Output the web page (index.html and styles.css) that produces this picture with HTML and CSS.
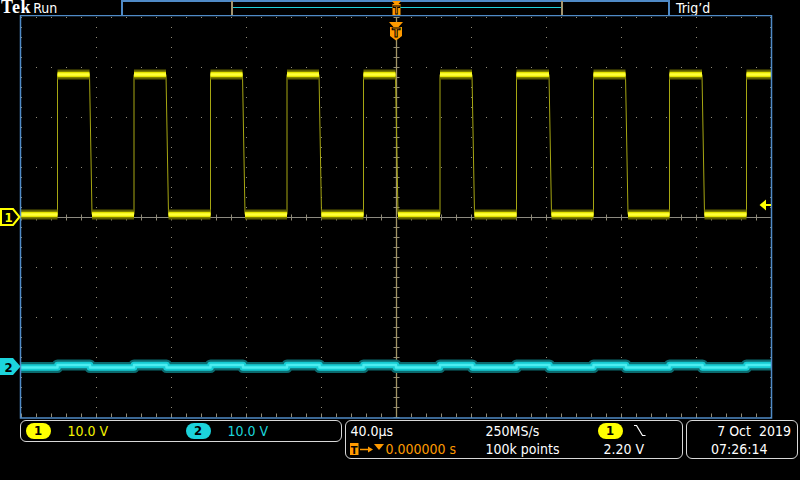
FILE: index.html
```html
<!DOCTYPE html>
<html>
<head>
<meta charset="utf-8">
<title>Tek scope</title>
<link rel="stylesheet" href="styles.css">
</head>
<body>
<div class="screen">
  <header class="topbar">
    <div class="brand"><span class="tek">Tek</span><span class="state">Run</span></div>
    <div class="record">
      <svg class="record-view" width="545" height="13" viewBox="123 2 545 13">
        <rect class="bracket" x="231" y="1" width="2" height="14"/>
        <rect class="bracket" x="561" y="1" width="2" height="14"/>
        <rect class="rec-line" x="233" y="7" width="328" height="1"/>
        <path class="trig-mark" d="M392 1H401L398.5 4H400.5V15H392.5V4H394.5Z"/>
        <text class="trig-t trig-t-small" x="396.5" y="14">T</text>
      </svg>
    </div>
    <div class="trig">Trig’d</div>
  </header>

  <svg class="scope" width="800" height="405" viewBox="0 15 800 405">
    <g class="grid">
      <path class="dots-h" d="M21 17.5H772M21 67.5H772M21 117.5H772M21 167.5H772M21 217.5H772M21 267.5H772M21 317.5H772M21 367.5H772M21 416.5H772"/>
      <path class="dots-v" d="M21.5 17V418M96.5 17V418M171.5 17V418M246.5 17V418M321.5 17V418M396.5 17V418M471.5 17V418M546.5 17V418M621.5 17V418M696.5 17V418M770.5 17V418"/>
      <path class="ticks-h" d="M21 217.5H772"/>
      <path class="ticks-v" d="M396.5 17V418"/>
      <path class="ticks-b" d="M21 415H772"/>
    </g>
    <path class="ref-line" d="M21 217.5H771"/>
    <path class="pos-line" d="M396.5 17V418"/>

    <g class="ch2">
      <path class="ch2-halo" d="M21 367.5H57.5V365H90V367.5H134V365H166.5V367.5H210.5V365H243V367.5H287V365H319.5V367.5H363.5V365H396V367.5H440V365H472.5V367.5H516.5V365H549.5V367.5H593.5V365H626V367.5H669.5V365H702.5V367.5H746.5V365H771"/>
      <path class="ch2-core" d="M21 367.5H57.5V365H90V367.5H134V365H166.5V367.5H210.5V365H243V367.5H287V365H319.5V367.5H363.5V365H396V367.5H440V365H472.5V367.5H516.5V365H549.5V367.5H593.5V365H626V367.5H669.5V365H702.5V367.5H746.5V365H771"/>
      <path class="ch2-hot" d="M21 367.5H57.5V365H90V367.5H134V365H166.5V367.5H210.5V365H243V367.5H287V365H319.5V367.5H363.5V365H396V367.5H440V365H472.5V367.5H516.5V365H549.5V367.5H593.5V365H626V367.5H669.5V365H702.5V367.5H746.5V365H771"/>
    </g>

    <g class="ch1">
      <path class="ch1-edge" d="M57.5 74.5V214.5M89.5 74.5L92 214.5M134 74.5V214.5M166 74.5L168.5 214.5M210.5 74.5V214.5M242.5 74.5L245 214.5M287 74.5V214.5M319 74.5L321.5 214.5M363.5 74.5V214.5M395.5 74.5L398 214.5M440 74.5V214.5M472 74.5L474.5 214.5M516.5 74.5V214.5M549 74.5L551.5 214.5M593.5 74.5V214.5M625.5 74.5L628 214.5M669.5 74.5V214.5M702 74.5L704.5 214.5M746.5 74.5V214.5"/>
      <path class="ch1-halo" d="M21 214.5H57.5M92 214.5H134M168.5 214.5H210.5M245 214.5H287M321.5 214.5H363.5M398 214.5H440M474.5 214.5H516.5M551.5 214.5H593.5M628 214.5H669.5M704.5 214.5H746.5M57.5 74.5H89.5M134 74.5H166M210.5 74.5H242.5M287 74.5H319M363.5 74.5H395.5M440 74.5H472M516.5 74.5H549M593.5 74.5H625.5M669.5 74.5H702M746.5 74.5H771"/>
      <path class="ch1-core" d="M21 214.5H57.5M92 214.5H134M168.5 214.5H210.5M245 214.5H287M321.5 214.5H363.5M398 214.5H440M474.5 214.5H516.5M551.5 214.5H593.5M628 214.5H669.5M704.5 214.5H746.5M57.5 74.5H89.5M134 74.5H166M210.5 74.5H242.5M287 74.5H319M363.5 74.5H395.5M440 74.5H472M516.5 74.5H549M593.5 74.5H625.5M669.5 74.5H702M746.5 74.5H771"/>
      <path class="ch1-hot" d="M21 214.5H57.5M92 214.5H134M168.5 214.5H210.5M245 214.5H287M321.5 214.5H363.5M398 214.5H440M474.5 214.5H516.5M551.5 214.5H593.5M628 214.5H669.5M704.5 214.5H746.5M57.5 74.5H89.5M134 74.5H166M210.5 74.5H242.5M287 74.5H319M363.5 74.5H395.5M440 74.5H472M516.5 74.5H549M593.5 74.5H625.5M669.5 74.5H702M746.5 74.5H771"/>
    </g>

    <rect class="frame" x="20.5" y="15.5" width="751" height="402.5"/>

    <path class="trig-mark" d="M389 22H403L398.5 27H402V36L396 40.5L390 36V27H393.5Z"/>
    <text class="trig-t" x="396" y="36.5">T</text>

    <path class="ch1-mark" d="M1 209H13L19.5 217L13 225H1Z"/>
    <text class="ch1-num" x="8.5" y="222">1</text>
    <path class="ch2-mark" d="M0 358H13L20.5 366.5L13 375H0Z"/>
    <text class="ch2-num" x="8.5" y="371.5">2</text>

    <path class="level-mark" d="M759.5 205L766 199.5V204H771V206H766V210.5Z"/>
  </svg>

  <footer class="readouts">
    <div class="box vert">
      <span class="pill pill-y">1</span><span class="val val-y">10.0 V</span>
      <span class="pill pill-c">2</span><span class="val val-c">10.0 V</span>
    </div>
    <div class="box horiz">
      <span class="cell c1">40.0µs</span>
      <span class="cell">250MS/s</span>
      <span class="cell c3"><span class="pill pill-y">1</span><svg class="slope" width="12" height="12" viewBox="0 0 12 12"><path d="M0 0.5H2.5L8.5 10.5H11.5"/></svg></span>
      <span class="cell delay"><svg class="delay-ico" width="36" height="14" viewBox="0 0 36 14"><rect class="t-box" x="0" y="1" width="8.5" height="12"/><text class="t-box-t" x="4.25" y="11.5">T</text><path class="arrow" d="M10 7.5H19"/><path class="arrow-head" d="M18 4.5L23 7.5L18 10.5Z"/><path class="arrow-head" d="M24 2H34L29 8Z"/></svg><span class="orange">0.000000 s</span></span>
      <span class="cell">100k points</span>
      <span class="cell c3b">2.20 V</span>
    </div>
    <div class="box clock">
      <div class="date">7 Oct  2019</div>
      <div class="time">07:26:14</div>
    </div>
  </footer>
</div>
</body>
</html>
```

FILE: styles.css
```css
html, body {
  margin: 0;
  padding: 0;
  background: #000;
}

.screen {
  width: 800px;
  height: 480px;
  overflow: hidden;
  background: #000;
  color: #fff;
  font-family: "DejaVu Sans Condensed", "DejaVu Sans", sans-serif;
  font-stretch: condensed;
  font-size: 14px;
}

/* ---------- top bar ---------- */
.topbar {
  display: flex;
  height: 15px;
  line-height: 16px;
}

.brand {
  width: 121px;
  display: flex;
  align-items: baseline;
}

.tek {
  font-family: "Liberation Serif", serif;
  font-weight: bold;
  font-size: 18px;
  line-height: 14px;
  letter-spacing: 0.6px;
  padding-left: 1px;
}

.state {
  margin-left: 2px;
}

.record {
  width: 549px;
  height: 15px;
  box-sizing: border-box;
  border: 2px solid #4f8ac6;
  border-bottom: 0;
}

.record-view {
  display: block;
  overflow: visible;
}

.bracket { fill: #a39570; }
.rec-line { fill: #1fd0d8; }

.trig {
  padding-left: 6px;
}

.trig-mark { fill: #ff9a00; }

.trig-t {
  fill: #ff9a00;
  stroke: #000;
  stroke-width: 1;
  font-family: "DejaVu Sans", sans-serif;
  font-weight: bold;
  font-size: 13px;
  text-anchor: middle;
}

.trig-t-small {
  font-size: 11px;
  stroke-width: 0.8;
}

/* ---------- plot ---------- */
.scope {
  display: block;
}

.grid path {
  fill: none;
  stroke: #8f8a76;
}

.dots-h { stroke-width: 1; stroke-dasharray: 1 14; }
.dots-v { stroke-width: 1; stroke-dasharray: 1 9; }
.ticks-h { stroke-width: 6; stroke-dasharray: 1 14; }
.ticks-v { stroke-width: 6; stroke-dasharray: 1 9; }
.ticks-b { stroke-width: 3; stroke-dasharray: 1 14; }

.ref-line {
  fill: none;
  stroke: #8c8a80;
  stroke-width: 1;
}

.pos-line {
  fill: none;
  stroke: #a39668;
  stroke-width: 1.3;
}

.ch1 path, .ch2 path {
  fill: none;
  stroke-linecap: butt;
  stroke-linejoin: round;
}

.ch1-edge { stroke: #a6a612; stroke-width: 1; }
.ch1-halo { stroke: #5e5e00; stroke-width: 10; }
.ch1-core { stroke: #e4e400; stroke-width: 5.5; }
.ch1-hot  { stroke: #ffff3a; stroke-width: 2.5; }

.ch2-halo { stroke: #0b6a6e; stroke-width: 11; }
.ch2-core { stroke: #16ccd3; stroke-width: 6.5; }
.ch2-hot  { stroke: #4cecf0; stroke-width: 2.5; }

.frame {
  fill: none;
  stroke: #4f8ac6;
  stroke-width: 1.5;
}

.ch1-mark {
  fill: #000;
  stroke: #ffff00;
  stroke-width: 2;
}

.ch1-num, .ch2-num {
  font-family: "DejaVu Sans", sans-serif;
  font-weight: bold;
  font-size: 13px;
  text-anchor: middle;
}

.ch1-num { fill: #ffff00; }
.ch2-mark { fill: #1cd4dc; }
.ch2-num { fill: #000; }

.level-mark { fill: #ffff00; }

/* ---------- readouts ---------- */
.readouts {
  display: flex;
  align-items: flex-start;
  gap: 3px;
  padding-left: 20px;
}

.box {
  box-sizing: border-box;
  border: 1.5px solid #d8d8d8;
  border-radius: 6px;
  line-height: 18px;
}

.pill {
  display: inline-block;
  width: 25px;
  height: 16px;
  border-radius: 8px;
  color: #000;
  font-family: "DejaVu Sans", sans-serif;
  font-weight: bold;
  font-size: 13px;
  line-height: 16px;
  text-align: center;
}

.pill-y { background: #ffff00; }
.pill-c { background: #1cd4dc; }

.vert {
  width: 322px;
  height: 22px;
  display: grid;
  grid-template-columns: 25px 135px 25px auto;
  align-items: center;
  padding-left: 4.5px;
}

.val { padding-left: 17px; }
.val-y { color: #f4f400; }
.val-c { color: #1cd4dc; }

.horiz {
  width: 338px;
  height: 39px;
  display: grid;
  grid-template-columns: 136px 112px auto;
  padding: 1px 0 0 3.5px;
}

.cell {
  display: flex;
  align-items: center;
  white-space: pre;
}

.c1 { padding-left: 1px; }

.slope {
  margin-left: 11px;
  fill: none;
  stroke: #fff;
  stroke-width: 1.2;
}

.delay-ico { display: block; }
.t-box { fill: #ff9a00; }
.t-box-t {
  fill: #000;
  font-family: "DejaVu Sans", sans-serif;
  font-weight: bold;
  font-size: 11px;
  text-anchor: middle;
}
.arrow { stroke: #ff9a00; stroke-width: 1.5; fill: none; }
.arrow-head { fill: #ff9a00; }

.orange { color: #ff9a00; }

.c3b { padding-left: 6px; }

.clock {
  width: 112px;
  height: 39px;
  padding-top: 1px;
}

.date {
  text-align: right;
  padding-right: 6px;
  white-space: pre;
}

.time {
  padding-left: 24px;
}
```
